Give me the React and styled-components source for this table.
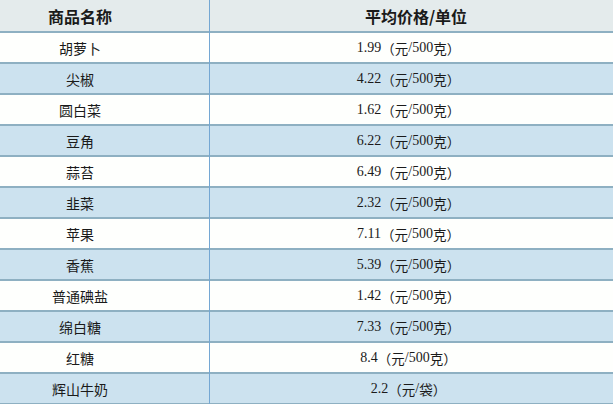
import React from "react";
import styled, { createGlobalStyle } from "styled-components";

const Global = createGlobalStyle`
  html, body { margin: 0; padding: 0; background: #ffffff; }
  body { width: 613px; height: 404px; overflow: hidden; }
`;

const Table = styled.div`
  display: grid;
  grid-template-columns: 209px 1px 1fr;
  width: 613px;
`;

const Row = styled.div`
  display: contents;
`;

const Cell = styled.div`
  box-sizing: border-box;
  height: ${(p) => (p.$head ? 33 : 31)}px;
  border-bottom: 2px solid #8eb0c2;
  background: ${(p) => (p.$head ? "#e4ebec" : p.$alt ? "#cce2ef" : "#fefffd")};
  display: flex;
  align-items: center;
  justify-content: center;
  color: #1a1a1a;
  font-family: "Noto Sans CJK SC", sans-serif;
  font-size: ${(p) => (p.$head ? 16 : p.$price ? 13.5 : 14)}px;
  font-weight: ${(p) => (p.$head ? 700 : 400)};
  padding-left: ${(p) => p.$pl || 0}px;
  padding-right: ${(p) => p.$pr || 0}px;
  white-space: nowrap;
`;

const Divider = styled.div`
  box-sizing: border-box;
  height: ${(p) => (p.$head ? 33 : 31)}px;
  background: #74a7d3;
`;

const Cjk = styled.span`
  font-family: "Noto Sans CJK SC", sans-serif;
`;

const Num = styled.span`
  font-family: "Liberation Serif", serif;
  font-size: 14px;
`;

const data = [
  ["胡萝卜", "1.99", "500克"],
  ["尖椒", "4.22", "500克"],
  ["圆白菜", "1.62", "500克"],
  ["豆角", "6.22", "500克"],
  ["蒜苔", "6.49", "500克"],
  ["韭菜", "2.32", "500克"],
  ["苹果", "7.11", "500克"],
  ["香蕉", "5.39", "500克"],
  ["普通碘盐", "1.42", "500克"],
  ["绵白糖", "7.33", "500克"],
  ["红糖", "8.4", "500克"],
  ["辉山牛奶", "2.2", "袋"],
];

function Unit({ u }) {
  if (u === "袋") return <Cjk>袋</Cjk>;
  return (
    <>
      <Num>500</Num>
      <Cjk>克</Cjk>
    </>
  );
}

export default function App() {
  return (
    <>
      <Global />
      <Table>
        <Row>
          <Cell $head $pr={49}>商品名称</Cell>
          <Divider $head />
          <Cell $head $pl={9}>平均价格/单位</Cell>
        </Row>
        {data.map(([name, price, unit], i) => (
          <Row key={name}>
            <Cell $alt={i % 2 === 1} $pr={49}>{name}</Cell>
            <Divider />
            <Cell $alt={i % 2 === 1} $price $pr={6}>
              <Num>{price}</Num>
              <Cjk>（元</Cjk>
              <Num>/</Num>
              <Unit u={unit} />
              <Cjk>）</Cjk>
            </Cell>
          </Row>
        ))}
      </Table>
    </>
  );
}
